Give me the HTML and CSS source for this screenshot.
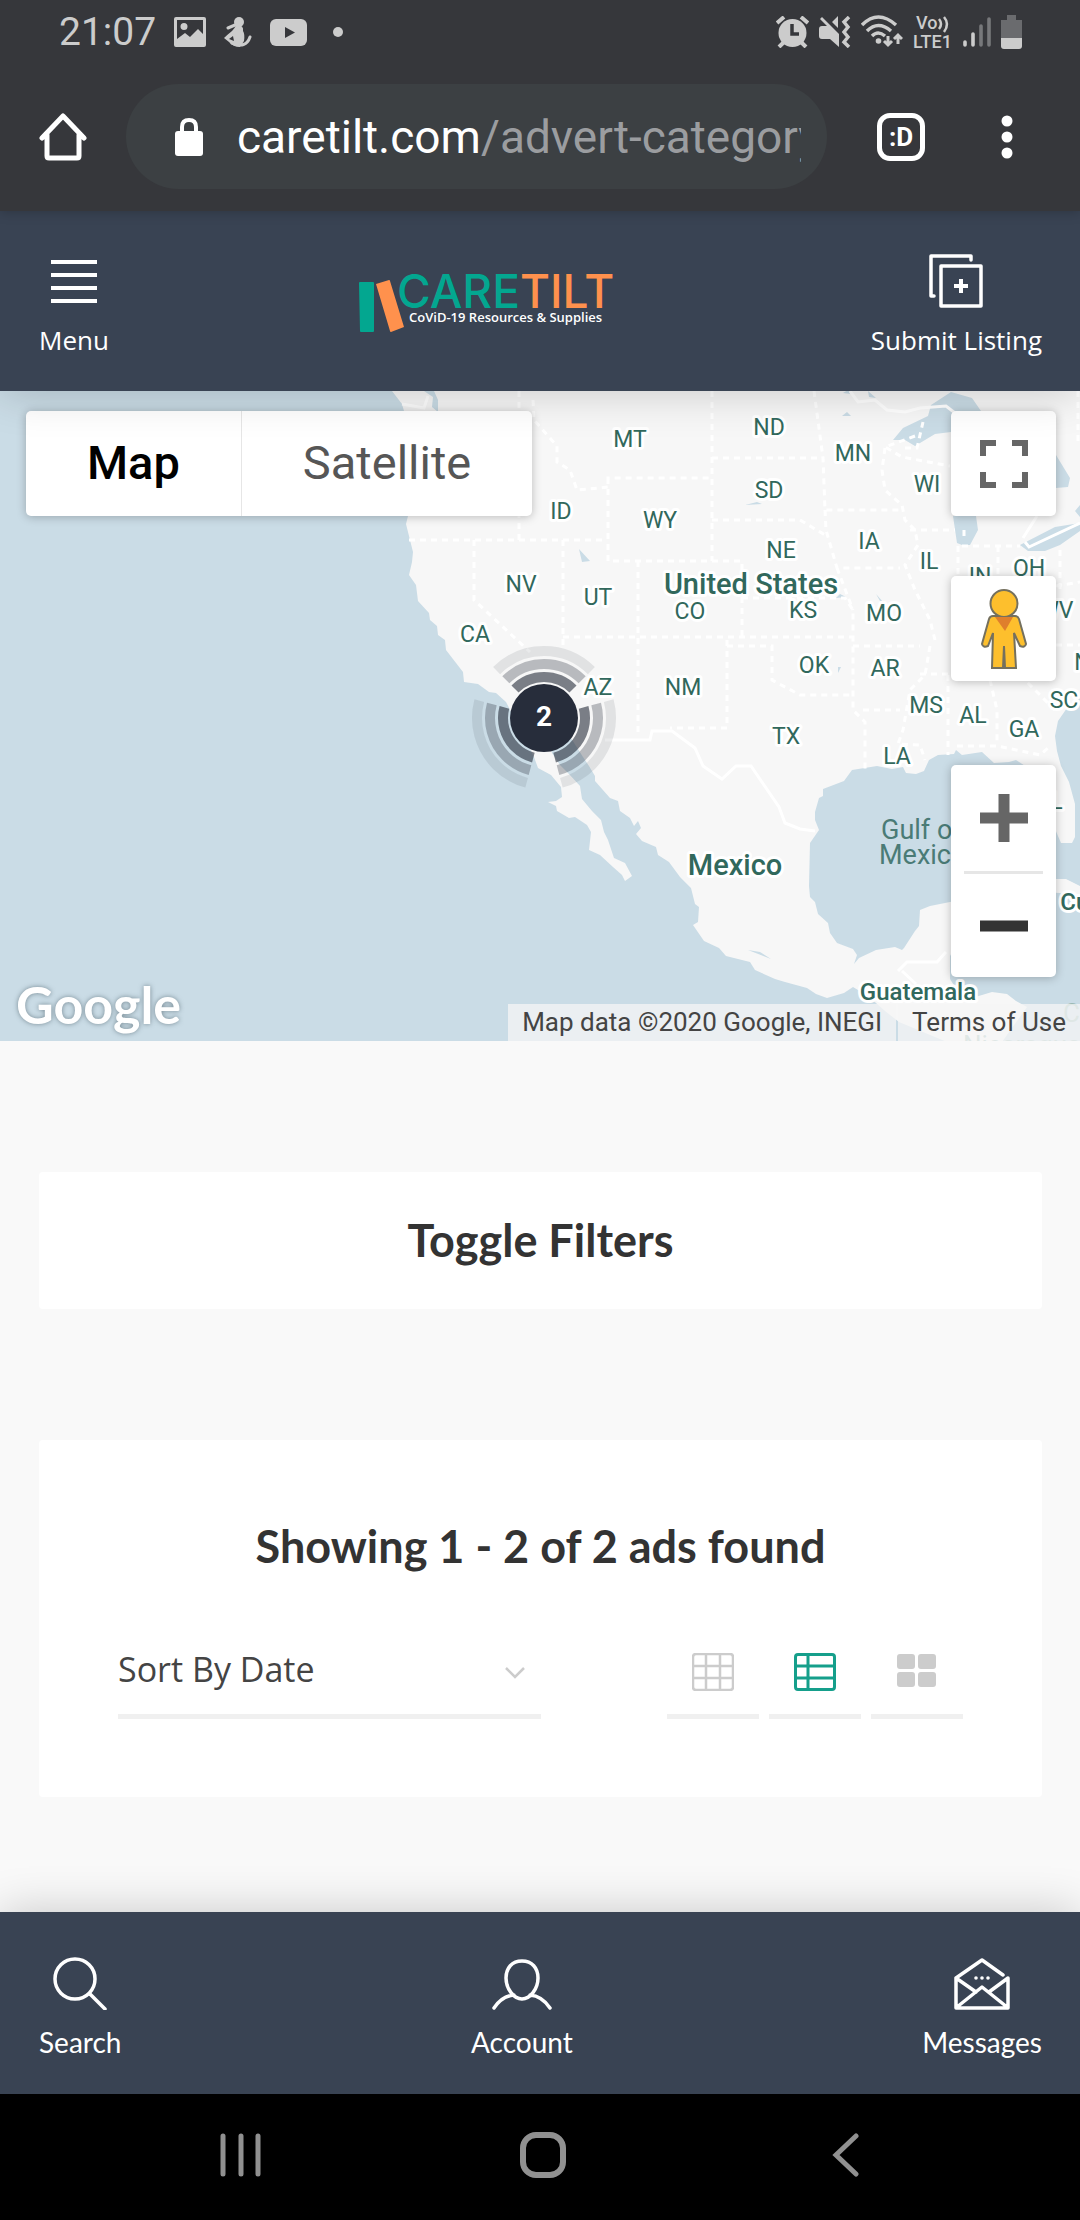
FILE: index.html
```html
<!DOCTYPE html>
<html lang="en">
<head>
<meta charset="utf-8">
<meta name="viewport" content="width=device-width, initial-scale=1">
<title>CareTilt</title>
<link rel="stylesheet" href="styles.css">
</head>
<body>
<div class="browser">
  <div class="status">
    <div class="status-group">
      <span class="clock">21:07</span>
      <svg width="32" height="30" viewBox="0 0 32 30"><path fill="#ccc" fill-rule="evenodd" d="M2 0h28q2 0 2 2v26q0 2-2 2H2q-2 0-2-2V2Q0 0 2 0zM3 3v19l8-6 5 4 8-8 5 5V3zM10 6a3.400 3.400 0 1 1 0 7 3.400 3.400 0 0 1 0-7z"/></svg>
      <svg width="28" height="30" viewBox="0 0 28 30"><g fill="#ccc"><circle cx="15" cy="5" r="5"/><path d="M13 8q7 0 6 6 2 3 1 10l-4 6q-7 0-11-5l-5-4q3-3 8-7 3-3 4-6z"/><path fill="none" stroke="#ccc" stroke-width="3" stroke-linecap="round" d="M11 8 4 11M8 26q14 6 18-6"/></g><path fill="#36373b" d="m5 22 4-3 1 5z"/></svg>
      <svg width="37" height="27" viewBox="0 0 37 27"><rect width="37" height="27" rx="6" fill="#ccc"/><path fill="#36373b" d="m15 8 10 5.500L15 19z"/></svg>
      <svg class="more-dot" width="10" height="10" viewBox="0 0 10 10"><circle cx="5" cy="5" r="5" fill="#ccc"/></svg>
    </div>
    <div class="status-group status-right">
      <svg width="33" height="32" viewBox="0 0 33 32"><circle cx="16.500" cy="17" r="14" fill="#ccc"/><path stroke="#ccc" stroke-width="4" d="m1 7 7-6M25 1l7 6M8 26l-5 5M25 26l5 5"/><path fill="none" stroke="#36373b" stroke-width="3.500" d="M16 8v10h7"/></svg>
      <svg width="32" height="32" viewBox="0 0 32 32"><path fill="#ccc" d="M0 13q0-3 3-3h5L1 3l2-2 17 17v13l-9-8H3q-3 0-3-3zM13 6l6-6v12z"/><path fill="none" stroke="#ccc" stroke-width="3.500" d="m30 1-5 5 4 5-4 5 4 5-4 5 5 5"/></svg>
      <svg width="42" height="34" viewBox="0 0 42 34"><g fill="none" stroke="#ccc" stroke-width="3.500"><path d="M1 10Q17-6 35 10M6 16q11-11 24 0M11 21q6-6 13 0"/><path stroke-width="3" d="M27 21v9M23 26l4 4 4-4M37 29v-9M33 24l4-4 4 4"/></g><circle cx="17.500" cy="26" r="2.800" fill="#ccc"/></svg>
      <svg class="volte" width="40" height="34" viewBox="0 0 40 34"><text x="3" y="14">Vo</text><text x="0" y="33">LTE1</text><path fill="none" stroke="#ccc" stroke-width="2.500" d="M26 4q4 5 0 10M31 2q6 7 0 15"/></svg>
      <svg width="28" height="32" viewBox="0 0 28 32"><path stroke="#ccc" stroke-width="3.600" stroke-linecap="round" d="M2 26v3M10 18v11"/><path stroke="#77787b" stroke-width="3.600" stroke-linecap="round" d="M18 10v19M26 3v26"/></svg>
      <svg width="21" height="34" viewBox="0 0 21 34"><path fill="#6a6b6e" d="M6 0h9v5h6v19H0V5h6z"/><path fill="#ccc" d="M0 23h21v8q0 3-3 3H3q-3 0-3-3z"/></svg>
    </div>
  </div>
  <div class="toolbar">
    <button class="icon-button" aria-label="Home"><svg width="48" height="48" viewBox="0 0 48 48"><path fill="none" stroke="#fff" stroke-width="5" stroke-linejoin="round" stroke-linecap="round" d="M3 25 24 3l21 22M8 22v21q0 2 2 2h28q2 0 2-2V22"/></svg></button>
    <a class="address" href="#"><svg width="28" height="38" viewBox="0 0 28 38"><path fill="none" stroke="#fff" stroke-width="4" d="M7 14V9q0-7 7-7t7 7v5"/><rect y="13" width="28" height="25" rx="3" fill="#fff"/></svg><span class="url">caretilt.com<span class="path">/advert-category</span></span></a>
    <button class="tabs" aria-label="Open tabs">:D</button>
    <button class="icon-button" aria-label="More options"><svg width="12" height="44" viewBox="0 0 12 44"><g fill="#fff"><circle cx="6" cy="6" r="5.500"/><circle cx="6" cy="22" r="5.500"/><circle cx="6" cy="38" r="5.500"/></g></svg></button>
  </div>
</div>

<header class="site-header">
  <button class="nav-item"><svg width="54" height="54" viewBox="0 0 54 54"><path stroke="#fff" stroke-width="4" d="M4 8h46M4 21h46M4 34h46M4 47h46"/></svg>Menu</button>
  <a class="logo" href="#" aria-label="CareTilt">
    <svg width="262" height="58" viewBox="0 0 262 58"><path fill="#03a790" d="M0 6q0-1 1-1h13q1 0 1 1v48q0 1-1 1H2q-1 0-1-1z"/><path fill="#ff914d" d="m17 7 13-4q1 0 1 1l14 46-13 5q-1 0-1-1z"/><g class="logo-name"><text x="38" y="31" fill="#03a790">CARE<tspan fill="#ff914d">TILT</tspan></text></g><text class="logo-tag" x="50" y="45">CoViD-19 Resources &amp; Supplies</text></svg>
  </a>
  <a class="nav-item" href="#"><svg width="54" height="54" viewBox="0 0 54 54"><path fill="none" stroke="#fff" stroke-width="3.500" stroke-linecap="round" stroke-linejoin="round" d="M5 42H2V2h40v4M12 12h40v40H12z"/><path stroke="#fff" stroke-width="4" d="M25 32h14M32 25v14"/></svg>Submit Listing</a>
</header>

<section class="map" aria-label="Map">
  <svg class="map-canvas" viewBox="0 391 1080 650" preserveAspectRatio="xMidYMid slice">
    <path class="land" d="M392 391l10 13 2 7 2 60 2 45-2 8 4 16 3 12-1 10-3 13 7 10 2 16 11 12 1 7 7 6 1 9 7 5 1 10 17 22 1 10 14 2 11 8 7 1 10 9L534 757l4 11 13 7 10 12 1 10-6 4-8 1 8 4 1 5 12 7 6-1 12 8 4 7-2 18 11 5 13 12 9 8 3 6 7-5-7-13-11-5-6-18-4-8-3-12-9-9-10-12-2-13-11-12-9-9-8-12-5-18h22l14 22 6 9 6 10v5l15 17 8 3 2 10 10 7 4 8 4-5 3 7-5 6 6 7 14 6 2 8 11 7 11 15 11 11 4 16 4 3-1 15-5 3 11 16 15 7 7 8 24 6 5 8 20 9 10 3 22 6 9 6 11 4 17-5 9-6 5 3 9 5 18 16 14 11 48 20h55l25-35-11-6-9-7-15-2-20 6-12-3-10-16v-23l5-8v-47l-25 5-10 4-1 16-4 5-11 17-2 2-7-3-19 3-17 8-5 6 3-9-4-6-16-6-7-10-2-10-10-9-3-12-5-5-1-11 1-43 9-13-4-10v-8l4-14 4-2v-7l21-8 8-11 25-4 15 3 11-2 3 6 10 1 8-3 5-11 9-5 16-1 2-4 6 5 20-3 12 11 15-1 7-2 20 13 10 35 15 35h11l3-6v-33l-6-22-8-16-4-15-2-15 3-15 9-13 18-16V391z"/>
    <path class="land" d="M1025 888l31-9h10l14 7v14l-20-7-20-1z"/>
    <path class="water" d="M424 391l9 6-1 10 6 5v-12l-4-9zM893 440l10-12 25-12 3-11 20-13 21 6 9 13-1 30h-25l-4-9-16 2-20 12-10-6zM953 516l4 27 5 2 8 0 8-15-2-14zM1056 455l14 23-2 9-12 1zM1020 545l35-18 25-4v8l-20 14-15 6h-17zM1080 505l-5 6 5 6zM579 549l11 12-8 1zM843 393l5-3 3 4zM868 391l8 7-7-1zM842 416l5-4 4 4zM745 505l12-3 5 2zM836 598l10-1-6-3zM876 594l7 8-3-1zM838 667l3 0-3 6zM748 950l12 2 11 7z"/>
    <g class="state-lines">
      <path d="M519 391v149M533 400l1 20 23 26v16l13 8 7 20 23-2 8-1v-9h104M712 391v170M608 478v83h134v76M409 540h198M474 540v60l56 52M563 540v110M638 561v175M563 637h290M727 640v88h-57M712 458h111M712 520h88l25 15M814 391l9 67 2 52h77M825 510l1 20 11 38h63M742 598h103l8 12v100l12 12v48M727 646h45v34l28 15h53M853 646h67M863 710h37M837 568l16 42M930 646l-5 29-15 15-7 40-5 14 22 1 5 15M948 675v80M920 674h80M990 680l7 30v35M957 746h40l43 9 8-7M885 448l-3 22 3 20 17 15 3 15 10 10 3 15-13 20 10 25 15 30 5 20M910 530h45M958 546v90M998 546v40M962 546h58M1020 675l35 35M1056 586l24-4M1056 645h24"/>
      <path d="M905 448h12l6-26M915 436l-30 11 17 10 48 9M1060 550v40M1078 391v50M964 530v10"/>
    </g>
    <path class="country-lines" d="M402 404l22 4 4-12M605 740h45l2-9h20l23 17 8 18 19 13 14-13h15l28 41 6 16 15 6 15 2M850 391l8 11 17-2 12 10 18 2 15-4 26-2 9 7M898 971l9-9h30l9-10M1037 516l-14 22M1025 542l4 5 51-24M902 971l14 13"/>
    <g class="state-labels">
      <text x="630" y="447">MT</text><text x="561" y="519">ID</text><text x="660" y="528">WY</text><text x="521" y="592">NV</text><text x="598" y="605">UT</text><text x="690" y="619">CO</text><text x="475" y="642">CA</text><text x="598" y="695">AZ</text><text x="683" y="695">NM</text><text x="769" y="435">ND</text><text x="853" y="461">MN</text><text x="769" y="498">SD</text><text x="927" y="492">WI</text><text x="781" y="558">NE</text><text x="869" y="549">IA</text><text x="929" y="569">IL</text><text x="980" y="584">IN</text><text x="1029" y="576">OH</text><text x="803" y="618">KS</text><text x="884" y="621">MO</text><text x="814" y="673">OK</text><text x="885" y="676">AR</text><text x="926" y="713">MS</text><text x="973" y="723">AL</text><text x="1024" y="737">GA</text><text x="1064" y="708">SC</text><text x="786" y="744">TX</text><text x="897" y="764">LA</text><text x="1056" y="618">WV</text><text x="1090" y="670">NC</text><text x="1050" y="809">FL</text>
    </g>
    <g class="country-labels"><text x="751" y="594">United States</text><text x="735" y="875">Mexico</text><text class="minor" x="918" y="1000">Guatemala</text><text class="minor" x="1088" y="910">Cuba</text></g>
    <g class="sea-labels"><text x="881" y="839">Gulf of</text><text x="879" y="864">Mexico</text></g>
    <g class="faint-labels"><text x="1063" y="1022">C</text><text x="963" y="1054">Nicaragua</text></g>
    <g class="cluster" transform="translate(544 718)">
      <g transform="rotate(-135)"><circle r="41" pathLength="360" opacity=".6"/><circle r="54" pathLength="360" opacity=".3"/><circle r="67" pathLength="360" opacity=".1"/></g>
      <circle class="cluster-core" r="34"/><text y="8">2</text>
    </g>
  </svg>
  <div class="map-type"><button class="selected">Map</button><button>Satellite</button></div>
  <div class="map-controls">
    <button class="map-button" aria-label="Toggle fullscreen"><svg width="48" height="48" viewBox="0 0 48 48"><path fill="none" stroke="#666" stroke-width="6" d="M3 16V3h13M32 3h13v13M45 32v13H32M16 45H3V32"/></svg></button>
    <button class="map-button street-view" aria-label="Street View"><svg width="46" height="80" viewBox="0 0 46 80"><g fill="#fdbf2d" stroke="#74705e" stroke-width="2"><path d="M12 27h22q3 0 4 3l7 25q-1 4-6 2l-6-13 2 35H24l-1-22-1 22H11l1-35-5 13q-5 2-6-2l7-25q1-3 4-3z"/><circle cx="23" cy="14.500" r="13.500"/></g><path fill="#df7f2c" d="M14 28h18l-8 14z"/></svg></button>
    <div class="zoom">
      <button aria-label="Zoom in"><svg width="48" height="48" viewBox="0 0 48 48"><path stroke="#666" stroke-width="11" d="M0 24h48M24 0v48"/></svg></button>
      <button aria-label="Zoom out"><svg width="48" height="48" viewBox="0 0 48 48"><path stroke="#333" stroke-width="11" d="M0 24h48"/></svg></button>
    </div>
  </div>
  <a class="google" href="#">Google</a>
  <div class="attribution"><span>Map data ©2020 Google, INEGI</span><a href="#">Terms of Use</a></div>
</section>

<main class="content">
  <button class="card filters">Toggle Filters</button>
  <section class="card results">
    <h2>Showing 1 - 2 of 2 ads found</h2>
    <div class="results-tools">
      <div class="sort">
        <select aria-label="Sort ads"><option>Sort By Date</option></select>
        <svg width="20" height="12" viewBox="0 0 20 12"><path fill="none" stroke="#ccc" stroke-width="2.500" d="m1 1 9 9 9-9"/></svg>
      </div>
      <div class="views">
        <button aria-label="Grid view"><svg width="42" height="38" viewBox="0 0 42 38"><path fill="none" stroke="#ccc" stroke-width="2.500" d="M4 1h34q3 0 3 3v30q0 3-3 3H4q-3 0-3-3V4q0-3 3-3zM1 13h40M1 25h40M14 1v36M28 1v36"/></svg></button>
        <button aria-label="List view"><svg width="42" height="38" viewBox="0 0 42 38"><path fill="none" stroke="#159f8b" stroke-width="3" d="M4 1.500h34q2.500 0 2.500 2.500v30q0 2.500-2.500 2.500H4q-2.500 0-2.500-2.500V4q0-2.500 2.500-2.500zM1 13h40M1 25h40M14 1v36"/></svg></button>
        <button aria-label="Tile view"><svg width="42" height="38" viewBox="0 0 42 38"><g fill="#ccc"><rect x="1" y="1" width="18" height="15" rx="3"/><rect x="22" y="1" width="18" height="15" rx="3"/><rect x="1" y="19" width="18" height="15" rx="3"/><rect x="22" y="19" width="18" height="15" rx="3"/></g></svg></button>
      </div>
    </div>
  </section>
</main>

<nav class="bottom-nav">
  <a class="nav-item" href="#"><svg width="54" height="54" viewBox="0 0 54 54"><g fill="none" stroke="#fff" stroke-width="3.500" stroke-linecap="round"><circle cx="22" cy="23" r="20"/><path d="m37 38 15 15"/></g></svg>Search</a>
  <a class="nav-item" href="#"><svg width="60" height="54" viewBox="0 0 60 54"><path fill="none" stroke="#fff" stroke-width="3.500" stroke-linecap="round" d="M30 5c10 0 16 7 16 17 0 11-8 21-16 21S14 33 14 22C14 12 20 5 30 5zM2 52q8-12 20-13M58 52q-8-12-20-13"/></svg>Account</a>
  <a class="nav-item" href="#"><svg width="56" height="54" viewBox="0 0 56 54"><path fill="none" stroke="#fff" stroke-width="3.500" stroke-linejoin="round" stroke-linecap="round" d="M49 19 28 4 2 22v30h52V22L35 36M2 22l20 14M3 51l25-20 25 20"/><g fill="#fff"><circle cx="22" cy="22" r="1.800"/><circle cx="28" cy="22" r="1.800"/><circle cx="34" cy="22" r="1.800"/></g></svg>Messages</a>
</nav>

<div class="system-nav">
  <button aria-label="Recent apps"><svg width="42" height="46" viewBox="0 0 42 46"><path stroke="#919191" stroke-width="5" stroke-linecap="round" d="M3 4v38M21 4v38M38 4v38"/></svg></button>
  <button aria-label="Home screen"><svg width="46" height="46" viewBox="0 0 46 46"><rect x="3" y="3" width="40" height="40" rx="13" fill="none" stroke="#919191" stroke-width="6"/></svg></button>
  <button aria-label="Back"><svg width="28" height="46" viewBox="0 0 28 46"><path fill="none" stroke="#919191" stroke-width="5" stroke-linecap="round" d="M25 4 5 23l20 19"/></svg></button>
</div>
</body>
</html>
```
FILE: styles.css
```css
* { box-sizing: border-box; }

body {
  margin: 0;
  min-height: 100vh;
  display: flex;
  flex-direction: column;
  background: #f9f9f9;
  font-family: "Open Sans", sans-serif;
  color: #333;
}

button, select {
  margin: 0;
  padding: 0;
  border: 0;
  background: none;
  color: inherit;
  font: inherit;
}

a { color: inherit; text-decoration: none; }
svg { display: block; flex: none; }

/* Browser chrome */
.browser {
  position: relative;
  z-index: 3;
  background: #36373b;
  padding-bottom: 22px;
  font-family: Roboto, sans-serif;
  box-shadow: 0 0 12px rgba(0, 0, 0, .25);
}

.status {
  height: 64px;
  display: flex;
  justify-content: space-between;
  padding: 0 58px 0 59px;
}

.status-group { display: flex; align-items: center; gap: 18px; }
.status-right { gap: 10px; }
.clock { font-size: 39px; line-height: 64px; color: #ccc; }
.more-dot { margin-left: 8px; }
.volte { overflow: visible; }
.volte text { font: 500 18px Roboto, sans-serif; fill: #ccc; }

.toolbar {
  display: flex;
  align-items: center;
  padding: 20px 67px 0 39px;
}

.icon-button { display: block; }

.address {
  flex: 1;
  min-width: 0;
  height: 105px;
  margin: 0 50px 0 39px;
  padding: 0 26px 0 49px;
  border-radius: 53px;
  background: #3c4043;
  display: flex;
  align-items: center;
  gap: 34px;
  color: #fff;
}

.url {
  flex: 1;
  min-width: 0;
  overflow: hidden;
  white-space: nowrap;
  font-size: 46px;
  line-height: 64px;
}

.path { color: #9b9da0; }

.tabs {
  width: 48px;
  height: 48px;
  margin-right: 76px;
  border: 5px solid #fff;
  border-radius: 13px;
  color: #fff;
  font-size: 26px;
  font-weight: 700;
  line-height: 36px;
}

/* Site header and bottom bar */
.site-header, .bottom-nav {
  position: relative;
  z-index: 2;
  display: flex;
  justify-content: space-between;
  background: #394353;
  color: #fff;
  box-shadow: 0 0 44px rgba(0, 0, 0, .2);
}

.site-header { padding: 43px 38px 33px 39px; }

.bottom-nav {
  padding: 44px 38px 34px 39px;
  font-family: Lato, sans-serif;
}

.nav-item {
  display: flex;
  flex-direction: column;
  align-items: center;
  gap: 14px;
  font-size: 26px;
  line-height: 36px;
}

.bottom-nav .nav-item { font-size: 28px; }

.logo { margin-top: 23px; }
.logo svg { overflow: visible; }
.logo-name { font: 500 46px Inter, sans-serif; }
.logo-tag { font: 600 13px "Open Sans", sans-serif; fill: #fff; }

/* Map */
.map {
  position: relative;
  height: 650px;
  overflow: hidden;
  background: #cadce6;
  font-family: Roboto, sans-serif;
}

.map-canvas { width: 100%; height: 100%; }
.land { fill: #f7f7f7; }
.water { fill: #cadce6; }
.state-lines { fill: none; stroke: #fff; stroke-width: 3; stroke-dasharray: 6 5; }
.country-lines { fill: none; stroke: #fff; stroke-width: 3; }

.state-labels, .country-labels {
  fill: #31685c;
  stroke: #fff;
  stroke-width: 6px;
  stroke-linejoin: round;
  paint-order: stroke;
  text-anchor: middle;
  font-size: 23px;
}

.country-labels { font-size: 29px; font-weight: 500; }
.country-labels .minor { font-size: 24px; }
.sea-labels { fill: #4a7b76; font-size: 27px; }
.faint-labels { fill: #9cbab5; font-size: 26px; }

.cluster circle { fill: none; stroke: #272d3b; stroke-width: 10; stroke-dasharray: 90 30; }
.cluster .cluster-core { fill: #272d3b; stroke: none; }
.cluster text { fill: #fff; font-size: 28px; font-weight: 700; text-anchor: middle; }

.map-type, .map-button, .zoom {
  background: #fff;
  border-radius: 5px;
  box-shadow: 0 1px 10px rgba(0, 0, 0, .25);
}

.map-type {
  position: absolute;
  top: 20px;
  left: 26px;
  display: flex;
}

.map-type button {
  height: 105px;
  padding: 0 61px 2px;
  font-size: 47px;
  color: #565656;
}

.map-type .selected {
  color: #000;
  font-weight: 500;
  border-right: 1px solid #e6e6e6;
}

.map-controls {
  position: absolute;
  top: 20px;
  right: 24px;
  width: 105px;
}

.map-button {
  display: grid;
  place-items: center;
  width: 100%;
  height: 105px;
}

.street-view { margin: 60px 0 84px; }

.zoom { padding: 0 13px; }
.zoom button { display: grid; place-items: center; width: 100%; height: 106px; }
.zoom button + button { border-top: 3px solid #e6e6e6; }

.google {
  position: absolute;
  left: 16px;
  bottom: 6px;
  color: #fff;
  font: 700 52px/62px Lato, sans-serif;
  text-shadow: 0 0 5px rgba(60, 80, 90, .6);
}

.attribution {
  position: absolute;
  right: 0;
  bottom: 0;
  display: flex;
  gap: 2px;
  color: #444;
  font-size: 26px;
  line-height: 37px;
}

.attribution > * { padding: 0 14px; background: rgba(245, 245, 245, .75); }

/* Listing content */
.content {
  flex: 1;
  display: flex;
  flex-direction: column;
  gap: 131px;
  padding: 131px 38px 115px 39px;
}

.card { background: #fff; border-radius: 4px; }

.filters, .results h2 {
  font-family: Lato, sans-serif;
  font-size: 45px;
  font-weight: 700;
  line-height: 57px;
  text-align: center;
}

.filters { padding: 40px; }
.results { padding: 78px 79px; }
.results h2 { margin: 0 0 55px; }

.results-tools { display: flex; justify-content: space-between; }

.sort { position: relative; width: 50%; }

.sort select {
  appearance: none;
  width: 100%;
  height: 89px;
  border-bottom: 5px solid #f0f0f0;
  border-radius: 0;
  padding-bottom: 7px;
  color: #444;
  font-size: 34px;
}

.sort svg { position: absolute; right: 16px; top: 37px; pointer-events: none; }

.views { display: grid; grid-template-columns: repeat(3, 1fr); gap: 10px; width: 35%; }

.views button {
  display: grid;
  justify-items: center;
  align-content: start;
  height: 89px;
  padding-top: 23px;
  border-bottom: 5px solid #f0f0f0;
}

/* Android navigation */
.system-nav {
  display: grid;
  grid-template-columns: repeat(3, 1fr);
  height: 126px;
  padding: 0 84px 4px 90px;
  background: #000;
}

.system-nav button { display: grid; place-items: center; }
```
